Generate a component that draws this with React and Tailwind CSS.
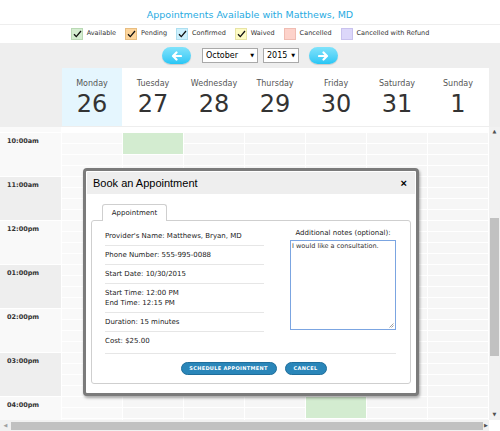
import React from 'react';

const FONT = { fontFamily: '"DejaVu Sans", Verdana, sans-serif' };

const legend = [
    { label: 'Available', bg: 'bg-[#d4edd0]', border: 'border-[#b9d9b4]', check: true },
    { label: 'Pending', bg: 'bg-[#fdd59c]', border: 'border-[#e8bd80]', check: true },
    { label: 'Confirmed', bg: 'bg-[#cdf0fd]', border: 'border-[#addff0]', check: true },
    { label: 'Waived', bg: 'bg-[#fdfbc4]', border: 'border-[#e8e4a4]', check: true },
    { label: 'Cancelled', bg: 'bg-[#fdd2ca]', border: 'border-[#f0bcb2]', check: false },
    { label: 'Cancelled with Refund', bg: 'bg-[#dcd7fa]', border: 'border-[#c9c2ee]', check: false },
];

const days = [
    { name: 'Monday', num: 26, today: true },
    { name: 'Tuesday', num: 27 },
    { name: 'Wednesday', num: 28 },
    { name: 'Thursday', num: 29 },
    { name: 'Friday', num: 30 },
    { name: 'Saturday', num: 31 },
    { name: 'Sunday', num: 1 },
];

const hours = ['10:00am', '11:00am', '12:00pm', '01:00pm', '02:00pm', '03:00pm', '04:00pm'];

// green booked blocks: [hourIndex, dayIndex]
const booked = [[0, 1], [6, 4]];

const Check = () => (
    <svg width="9" height="8" viewBox="0 0 9 8" className="absolute left-[1px] top-[1px]">
        <path d="M1 4.2 L3.3 6.6 L8 1" fill="none" stroke="#111" strokeWidth="1.3" />
    </svg>
);

const Arrow = ({ dir }) => (
    <svg width="11" height="10" viewBox="0 0 11 10">
        {dir === 'left' ? (
            <path d="M10 5 H2.5 M5.5 1.5 L2 5 L5.5 8.5" fill="none" stroke="#fff" strokeWidth="2.2" strokeLinecap="round" strokeLinejoin="round" />
        ) : (
            <path d="M1 5 H8.5 M5.5 1.5 L9 5 L5.5 8.5" fill="none" stroke="#fff" strokeWidth="2.2" strokeLinecap="round" strokeLinejoin="round" />
        )}
    </svg>
);

const NavButton = ({ dir }) => (
    <div className="w-[29px] h-[17px] rounded-full bg-gradient-to-b from-[#7fe3fb] to-[#23c6f5] flex items-center justify-center shadow-[0_1px_1px_rgba(0,0,0,0.15)]">
        <Arrow dir={dir} />
    </div>
);

const FakeSelect = ({ value, width }) => (
    <div className={`${width} h-[15px] border border-[#a9a9a9] bg-white flex items-center justify-between pl-[3px] pr-[3px] text-[8px] text-black`}>
        <span>{value}</span>
        <span className="text-[5px]">▼</span>
    </div>
);

const HourRow = ({ label, index }) => (
    <div className="flex h-[44px] shrink-0">
        <div className={`w-[61px] mr-[1px] mb-[1px] pl-[7px] pt-[4px] text-[6.5px] font-bold text-[#333] ${index % 2 === 0 ? 'bg-[#f9f9f9]' : 'bg-[#eeeeee]'}`}>
            {label}
        </div>
        {days.map((d, di) => {
            const isBooked = booked.some(([h, dd]) => h === index && dd === di);
            return (
                <div key={di} className="w-[61px] flex flex-col">
                    {isBooked ? (
                        <>
                            <div className="h-[22px] bg-[#d3ecd0] mr-[1px] mb-[1px]" />
                            <div className="h-[10px] bg-[#f7f7f7] mr-[1px] mb-[1px]" />
                            <div className="h-[10px] bg-[#f7f7f7] mr-[1px] mb-[1px]" />
                        </>
                    ) : (
                        [0, 1, 2, 3].map((s) => (
                            <div key={s} className={`h-[10px] mr-[1px] mb-[1px] ${d.today ? 'bg-[#f9f9f9]' : 'bg-[#f6f6f6]'}`} />
                        ))
                    )}
                </div>
            );
        })}
    </div>
);

const InfoRow = ({ children, last }) => (
    <div className={`pt-[4px] pb-[4px] ${last ? '' : 'border-b border-[#e6e6e6]'}`}>{children}</div>
);

const Modal = () => (
    <div className="absolute left-[83px] top-[168px] w-[336px] h-[228px] border-[3px] border-[#7b7b7b] rounded-[4px] bg-white shadow-[1px_2px_3px_rgba(0,0,0,0.35)] flex flex-col">
        <div className="h-[22px] bg-[#eeeeee] flex items-center justify-between pl-[6px] pr-[8px] mt-[1px] mx-[1px]">
            <span className="text-[11px] text-black" style={{ fontFamily: '"Liberation Sans", Arial, sans-serif' }}>Book an Appointment</span>
            <span className="text-[11px] font-bold text-black leading-none" style={{ fontFamily: '"Liberation Sans", Arial, sans-serif' }}>×</span>
        </div>
        <div className="flex-1 px-[5px] pt-[10px] pb-[9px] flex flex-col">
            <div className="flex pl-[11px]">
                <div className="h-[17px] w-[65px] border border-b-0 border-[#cfcfcf] rounded-t-[3px] bg-white flex items-center justify-center text-[7px] text-[#222] -mb-[1px] relative z-10">
                    Appointment
                </div>
            </div>
            <div className="flex-1 border border-[#cfcfcf] rounded-[3px] pl-[13px] pr-[14px] pt-[6px] flex flex-col">
                <div className="flex justify-between">
                    <div className="w-[159px] text-[7px] text-[#222] leading-[10px] flex flex-col">
                        <InfoRow>Provider's Name: Matthews, Bryan, MD</InfoRow>
                        <InfoRow>Phone Number: 555-995-0088</InfoRow>
                        <InfoRow>Start Date: 10/30/2015</InfoRow>
                        <InfoRow>Start Time: 12:00 PM<br />End Time: 12:15 PM</InfoRow>
                        <InfoRow>Duration: 15 minutes</InfoRow>
                        <InfoRow last>Cost: $25.00</InfoRow>
                    </div>
                    <div className="w-[106px] flex flex-col items-center pt-[1px]">
                        <div className="text-[7px] text-[#222] leading-[10px] mb-[2px]">Additional notes (optional):</div>
                        <div className="w-[106px] h-[90px] border border-[#7ba5e1] bg-white text-[6.5px] text-[#333] leading-[9px] pl-[1px] pt-[1px] relative">
                            I would like a consultation.
                            <svg width="5" height="5" viewBox="0 0 5 5" className="absolute right-[1px] bottom-[1px]">
                                <path d="M4.5 0.5 L0.5 4.5 M4.5 2.5 L2.5 4.5" stroke="#888" strokeWidth="0.8" />
                            </svg>
                        </div>
                    </div>
                </div>
                <div className="border-t border-[#e6e6e6] mt-[3px] pt-[8px] flex justify-center gap-[8px] pl-[6px]">
                    <div className="w-[96px] h-[13px] rounded-full bg-[#2a86b9] border border-[#1f6e9b] text-white text-[5px] font-bold tracking-[0.3px] flex items-center justify-center">
                        SCHEDULE APPOINTMENT
                    </div>
                    <div className="w-[42px] h-[13px] rounded-full bg-[#2a86b9] border border-[#1f6e9b] text-white text-[5px] font-bold tracking-[0.3px] flex items-center justify-center">
                        CANCEL
                    </div>
                </div>
            </div>
        </div>
    </div>
);

export default function App() {
    return (
        <div className="relative w-[500px] h-[431px] bg-white overflow-hidden flex flex-col" style={FONT}>
            {/* Title */}
            <div className="h-[25px] flex items-center justify-center pt-[6px] text-[9.5px] text-[#29abe2] border-b border-[#eeeeee] shrink-0">
                Appointments Available with Matthews, MD
            </div>

            {/* Legend */}
            <div className="h-[18px] flex items-center justify-center text-[6.5px] text-[#333] bg-white shrink-0">
                {legend.map((l, i) => (
                    <div key={i} className="flex items-center mr-[9px] last:mr-0">
                        <div className={`relative w-[12px] h-[12px] border ${l.border} ${l.bg} mr-[4px]`}>
                            {l.check && <Check />}
                        </div>
                        <span>{l.label}</span>
                    </div>
                ))}
            </div>

            {/* Month navigation */}
            <div className="h-[25px] bg-[#eeeeee] flex items-center justify-center shrink-0">
                <NavButton dir="left" />
                <div className="ml-[11px]"><FakeSelect value="October" width="w-[56px]" /></div>
                <div className="ml-[5px]"><FakeSelect value="2015" width="w-[36px]" /></div>
                <div className="ml-[10px]"><NavButton dir="right" /></div>
            </div>

            {/* Day headers */}
            <div className="h-[58px] flex shrink-0">
                <div className="w-[62px] bg-[#eeeeee]" />
                {days.map((d, i) => (
                    <div key={i} className={`w-[60px] mr-[1px] flex flex-col items-center pt-[11px] ${d.today ? 'bg-[#e5f6fe]' : 'bg-white'}`}>
                        <div className="text-[8px] text-[#555] leading-[10px]">{d.name}</div>
                        <div className="text-[24px] text-[#333] leading-[28px] mt-[1px]">{d.num}</div>
                    </div>
                ))}
                <div className="flex-1 bg-[#eeeeee]" />
            </div>

            {/* Scrollable body */}
            <div className="flex h-[294px] shrink-0 border-t border-[#eeeeee]">
                <div className="w-[489px] overflow-hidden flex flex-col">
                    <div className="flex h-[6px] shrink-0">
                        <div className="w-[61px] mr-[1px] mb-[1px] bg-[#fafafa]" />
                        {days.map((d, i) => (
                            <div key={i} className="w-[60px] mr-[1px] mb-[1px] bg-white" />
                        ))}
                    </div>
                    {hours.map((h, i) => (
                        <HourRow key={h} label={h} index={i} />
                    ))}
                </div>
                {/* vertical scrollbar */}
                <div className="flex-1 bg-[#f1f1f1] flex flex-col items-center">
                    <div className="h-[10px] flex items-center justify-center text-[5px] text-[#505050]">▲</div>
                    <div className="h-[81px]" />
                    <div className="w-[9px] h-[138px] bg-[#c1c1c1]" />
                    <div className="flex-1" />
                    <div className="h-[10px] flex items-center justify-center text-[5px] text-[#505050]">▼</div>
                </div>
            </div>

            {/* horizontal scrollbar */}
            <div className="h-[11px] flex shrink-0">
                <div className="w-[489px] bg-[#f1f1f1] flex items-center">
                    <div className="w-[11px] flex items-center justify-center text-[5px] text-[#a0a0a0]">◀</div>
                    <div className="w-[472px] h-[8px] bg-[#c1c1c1]" />
                    <div className="flex-1 flex items-center justify-center text-[5px] text-[#505050]">▶</div>
                </div>
                <div className="flex-1 bg-white" />
            </div>

            <Modal />
        </div>
    );
}
